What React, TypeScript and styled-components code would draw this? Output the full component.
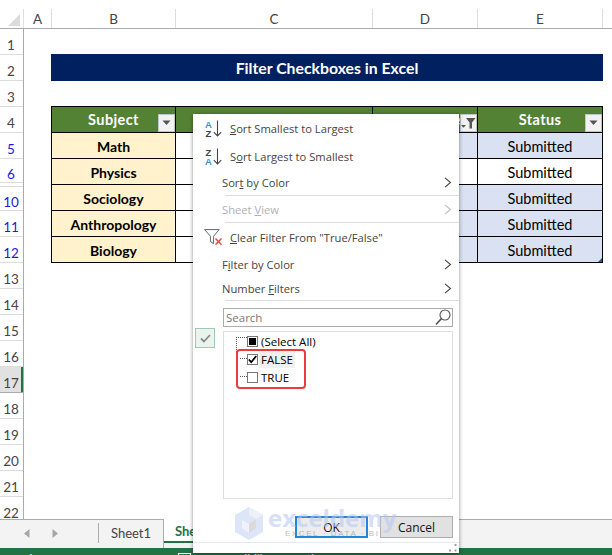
import React from "react";
import styled, { createGlobalStyle } from "styled-components";

const Global = createGlobalStyle`
  html, body { margin: 0; padding: 0; background: #fff; overflow: hidden; }
  * { box-sizing: border-box; }
`;

const CELL_FONT = `"Lato", "Liberation Sans", sans-serif`;
const UI_FONT = `"Open Sans", "Noto Sans", sans-serif`;

const Window = styled.div`
  position: relative;
  width: 612px;
  height: 555px;
  overflow: hidden;
  display: flex;
  flex-direction: column;
  background: #fff;
  font-family: ${CELL_FONT};
`;

/* ---------- column headers ---------- */
const ColumnBar = styled.div`
  display: flex;
  height: 29px;
  padding-top: 9px;
  border-bottom: 1px solid #ababab;
  background: #fff;
  color: #444;
  font-size: 13.5px;
`;
const Corner = styled.div`
  width: 24px;
  border-right: 1px solid #e0e0e0;
  display: flex;
  align-items: flex-end;
  justify-content: flex-end;
  padding: 0 3px 2px 0;
`;
const ColumnHead = styled.div<{ $w: number }>`
  width: ${(p) => p.$w}px;
  border-right: 1px solid #dcdcdc;
  display: flex;
  align-items: center;
  justify-content: center;
`;

/* ---------- sheet body ---------- */
const Body = styled.div`
  display: flex;
  flex: 1;
  min-height: 0;
`;
const RowRail = styled.div`
  width: 24px;
  border-right: 1px solid #ababab;
  overflow: hidden;
  flex: none;
`;
const RowHead = styled.div<{ $h: number; $filtered?: boolean; $active?: boolean }>`
  height: ${(p) => p.$h}px;
  display: flex;
  align-items: center;
  justify-content: center;
  padding: 6px 1px 0 0;
  font-size: 13.5px;
  color: ${(p) => (p.$filtered ? "#1a1ae0" : "#444")};
  border-bottom: 1px solid ${(p) => (p.$active ? "#ababab" : "#dcdcdc")};
  background: ${(p) => (p.$active ? "#e1e1e1" : "#fff")};
  box-shadow: ${(p) => (p.$active ? "inset -2px 0 0 #217346" : "none")};
`;
const HiddenGap = styled.div`
  height: 4px;
  border-bottom: 1px solid #dcdcdc;
`;
const Sheet = styled.div`
  flex: 1;
  padding-left: 27px;
`;
const Title = styled.div`
  width: 552px;
  height: 27px;
  margin-top: 25px;
  padding-bottom: 1px;
  background: #002060;
  color: #fff;
  font-weight: 700;
  font-size: 15.8px;
  display: flex;
  align-items: center;
  justify-content: center;
`;
const Table = styled.div`
  position: relative;
  display: grid;
  grid-template-columns: 124px 197px 105px 125px;
  width: 552px;
  margin-top: 25px;
  border-top: 1px solid #000;
  border-left: 1px solid #000;
`;
const HeadCell = styled.div`
  height: 26px;
  position: relative;
  background: #548235;
  color: #fff;
  font-weight: 700;
  font-size: 14.5px;
  letter-spacing: 0.4px;
  border-right: 1px solid #000;
  border-bottom: 1px solid #000;
  display: flex;
  align-items: center;
  justify-content: center;
`;
const Cell = styled.div<{ $kind: "subject" | "blue" | "white"; $bold?: boolean }>`
  height: 26px;
  padding-top: 1px;
  background: ${(p) => (p.$kind === "subject" ? "#fff2cc" : p.$kind === "blue" ? "#d9e1f2" : "#fff")};
  color: #000;
  font-weight: ${(p) => (p.$bold ? 700 : 400)};
  font-size: ${(p) => (p.$bold ? 14 : 14.5)}px;
  border-right: 1px solid #000;
  border-bottom: 1px solid #000;
  display: flex;
  align-items: center;
  justify-content: center;
`;
const FilterButton = styled.span`
  position: absolute;
  right: 0;
  bottom: 0;
  width: 17px;
  height: 18px;
  background: #f2f2f2;
  border: 1px solid #c4c4c4;
  display: flex;
  align-items: center;
  justify-content: center;
`;
const ResizeMark = styled.span`
  position: absolute;
  right: 1px;
  bottom: 1px;
  width: 0;
  height: 0;
  border-left: 4px solid transparent;
  border-bottom: 4px solid #2f5597;
`;

/* ---------- tabs + status ---------- */
const TabBar = styled.div`
  height: 29px;
  flex: none;
  display: flex;
  background: #f3f3f3;
  border-top: 1px solid #ababab;
`;
const TabNav = styled.div`
  width: 99px;
  display: flex;
  align-items: center;
  gap: 22px;
  padding: 0 0 2px 24px;
  position: relative;
`;
const NavDivider = styled.span`
  position: absolute;
  right: 0;
  top: 3px;
  height: 20px;
  border-right: 1px solid #ababab;
`;
const Tab = styled.div`
  width: 65px;
  height: 28px;
  border-right: 1px solid #ababab;
  color: #444;
  font-size: 13px;
  display: flex;
  align-items: center;
  justify-content: center;
  padding-bottom: 3px;
`;
const ActiveTab = styled.div`
  width: 70px;
  height: 24px;
  margin-top: -1px;
  padding: 1px 0 0 11px;
  background: #fff;
  border-bottom: 2px solid #217346;
  color: #217346;
  font-weight: 700;
  font-size: 13px;
  display: flex;
  align-items: center;
`;
const StatusBar = styled.div`
  height: 7px;
  flex: none;
  background: #217346;
  color: #fff;
  font-size: 12px;
  line-height: 14px;
  overflow: hidden;
  display: flex;
  padding: 4px 0 0 6px;
`;
const StatusBox = styled.span`
  width: 13px;
  height: 14px;
  margin: 1px 17px 0 140px;
  background: #217346;
  border: 1px solid #fff;
`;

/* ---------- filter menu ---------- */
const Menu = styled.div`
  position: absolute;
  left: 193px;
  top: 114px;
  width: 266px;
  height: 439px;
  background: #fff;
  box-shadow: 0 1px 4px rgba(0, 0, 0, 0.45);
  font-family: ${UI_FONT};
  font-size: 11.2px;
  color: #444;
  display: flex;
  flex-direction: column;
`;
const MenuItem = styled.div<{ $h: number; $disabled?: boolean; $tight?: boolean }>`
  height: ${(p) => p.$h}px;
  flex: none;
  display: flex;
  align-items: center;
  padding-left: ${(p) => (p.$tight ? 11 : 29)}px;
  padding-right: 7px;
  color: ${(p) => (p.$disabled ? "#b1b1b1" : "#444")};
`;
const IconSlot = styled.span`
  width: 26px;
  height: 100%;
  flex: none;
  display: flex;
  align-items: center;
`;
const Label = styled.span`
  flex: 1;
  white-space: nowrap;
`;
const MenuSeparator = styled.div`
  height: 1px;
  flex: none;
  margin-left: 32px;
  background: #dcdcdc;
`;
const SortGlyph = styled.span`
  position: relative;
  display: flex;
  flex-direction: column;
  width: 9px;
  font-family: "Liberation Sans", sans-serif;
  font-size: 9.5px;
  line-height: 9px;
  font-weight: 700;
  text-align: center;
`;
const SortLetter = styled.span<{ $blue?: boolean }>`
  color: ${(p) => (p.$blue ? "#3f8fd6" : "#444")};
`;
const SearchBox = styled.div`
  flex: none;
  width: 230px;
  height: 19px;
  margin: 7px 0 0 30px;
  border: 1px solid #ababab;
  padding: 0 1px 0 2px;
  display: flex;
  align-items: center;
  justify-content: space-between;
  color: #777;
  font-size: 11.5px;
`;
const ListRow = styled.div`
  display: flex;
  flex: none;
  margin-top: 1px;
`;
const CheckTile = styled.div`
  width: 20px;
  height: 20px;
  margin: 0 8px 0 2px;
  background: #e9f4ee;
  border: 1px solid #9ccbb0;
  display: flex;
  align-items: center;
  justify-content: center;
`;
const TreeBox = styled.div`
  position: relative;
  width: 230px;
  height: 168px;
  margin-top: 3px;
  border: 1px solid #dedede;
  padding: 0 0 0 12px;
  color: #000;
  font-size: 11.5px;
`;
const TreeRow = styled.div`
  display: flex;
  align-items: center;
  height: 18px;
`;
const Connector = styled.span<{ $root?: boolean }>`
  width: ${(p) => (p.$root ? 11 : 7)}px;
  height: 9px;
  margin-top: -9px;
  margin-left: ${(p) => (p.$root ? 0 : 4)}px;
  border-bottom: 1px dotted #555;
  ${(p) => (p.$root ? "border-left: 1px dotted #555; height: 15px; margin-top: 6px; border-bottom: none; border-top: 1px dotted #555;" : "")}
  flex: none;
`;
const TreeCheck = styled.span<{ $state: "mixed" | "on" | "off" }>`
  width: 11px;
  height: 11px;
  border: 1px solid #777;
  background: #fff;
  flex: none;
  display: flex;
  align-items: center;
  justify-content: center;
  margin-right: 1px;
  &::after {
    content: "";
    display: ${(p) => (p.$state === "mixed" ? "block" : "none")};
    width: 7px;
    height: 7px;
    background: #000;
  }
`;
const TreeLabel = styled.span<{ $hover?: boolean }>`
  padding: 0 2px;
  line-height: 17px;
  background: ${(p) => (p.$hover ? "#f0f0f0" : "transparent")};
`;
const Highlight = styled.div`
  position: absolute;
  left: 12px;
  top: 17px;
  width: 70px;
  height: 40px;
  border: 2.5px solid #ee3a3f;
  border-radius: 4px;
  pointer-events: none;
`;
const ButtonRow = styled.div`
  display: flex;
  gap: 12px;
  margin: 17px 0 0 102px;
  flex: none;
`;
const OkButton = styled.div`
  width: 73px;
  height: 22px;
  background: #ececec;
  border: 2px solid #1f86dc;
  color: #111;
  font-size: 12px;
  display: flex;
  align-items: center;
  justify-content: center;
`;
const CancelButton = styled.div`
  width: 73px;
  height: 22px;
  background: #e1e1e1;
  border: 1px solid #adadad;
  color: #111;
  font-size: 12px;
  display: flex;
  align-items: center;
  justify-content: center;
`;
const MenuFooter = styled.div`
  margin-top: 4px;
  flex: 1;
  border-top: 1px solid #e3ebf2;
  display: flex;
  justify-content: flex-end;
  align-items: flex-end;
  padding: 0 2px 1px 0;
`;

/* ---------- watermark ---------- */
const Watermark = styled.div`
  position: absolute;
  left: 235px;
  top: 507px;
  display: flex;
  gap: 5px;
  pointer-events: none;
  opacity: 0.55;
`;
const WatermarkText = styled.div`
  display: flex;
  flex-direction: column;
  align-items: center;
`;
const WatermarkName = styled.span`
  font-family: "Open Sans", sans-serif;
  font-weight: 700;
  font-size: 24px;
  line-height: 22px;
  color: #b4c6f2;
`;
const WatermarkTag = styled.span`
  font-family: "Liberation Sans", sans-serif;
  font-size: 8px;
  line-height: 9px;
  letter-spacing: 1.6px;
  color: #888;
`;

/* ---------- drawings ---------- */
const Down = () => (
  <svg width="9" height="6" viewBox="0 0 9 6">
    <path d="M0.5 0.5h8L4.5 5z" fill="#555" />
  </svg>
);
const FilterOn = () => (
  <svg width="15" height="12" viewBox="0 0 15 12">
    <path d="M5 1h9.5L11 5.5V11.5H8.5V5.5z" fill="#555" />
    <path d="M0 8h5L2.5 10.8z" fill="#555" />
  </svg>
);
const Arrow = () => (
  <svg width="9" height="17" viewBox="0 0 9 17" fill="none" stroke="#444" strokeWidth="1.1">
    <path d="M4.5 0.5V16M0.8 12.2 4.5 16 8.2 12.2" />
  </svg>
);
const Chevron = ({ light }: { light?: boolean }) => (
  <svg width="8" height="11" viewBox="0 0 8 11" fill="none" stroke={light ? "#bdbdbd" : "#444"} strokeWidth="1.1">
    <path d="M1 0.8 6.5 5.5 1 10.2" />
  </svg>
);
const ClearFunnel = () => (
  <svg width="19" height="17" viewBox="0 0 19 17" fill="none">
    <path d="M0.6 0.6H15.2L9.6 7.2V14.8L6.4 12.4V7.2z" stroke="#666" strokeWidth="1" />
    <path d="M11.5 9.5 17.5 15.8M17.5 9.5 11.5 15.8" stroke="#e4454a" strokeWidth="1.4" />
  </svg>
);
const Magnifier = () => (
  <svg width="16" height="17" viewBox="0 0 16 17" fill="none" stroke="#555" strokeWidth="1.1">
    <circle cx="10" cy="6" r="5" />
    <path d="M6.4 9.6 1 15.5" strokeWidth="1.6" />
  </svg>
);
const TileCheck = () => (
  <svg width="11" height="9" viewBox="0 0 11 9" fill="none" stroke="#8a8a8a" strokeWidth="1.8">
    <path d="M1 4.5 4 7.5 10 1" />
  </svg>
);
const BoxCheck = () => (
  <svg width="9" height="9" viewBox="0 0 9 9" fill="none" stroke="#000" strokeWidth="1.8">
    <path d="M0.8 4.5 3.2 7.2 8.2 1" />
  </svg>
);
const Grip = () => (
  <svg width="8" height="8" viewBox="0 0 8 8" fill="#a0a0a0">
    <rect x="5.5" y="0" width="2" height="2" />
    <rect x="0" y="5.5" width="2" height="2" />
    <rect x="5.5" y="5.5" width="2" height="2" />
  </svg>
);
const TriLeft = () => (
  <svg width="6" height="9" viewBox="0 0 6 9">
    <path d="M5.5 0v9L0 4.5z" fill="#a6a6a6" />
  </svg>
);
const TriRight = () => (
  <svg width="6" height="9" viewBox="0 0 6 9">
    <path d="M0.5 0v9L6 4.5z" fill="#a6a6a6" />
  </svg>
);
const CornerMark = () => (
  <svg width="12" height="12" viewBox="0 0 12 12">
    <path d="M12 0V12H0z" fill="#dcdcdc" />
  </svg>
);
const Cube = () => (
  <svg width="28" height="33" viewBox="0 0 28 33">
    <path d="M14 0 28 8V25L14 33 0 25V8z" fill="#c3d1f4" />
    <path d="M14 0 28 8 21 12 14 8z" fill="#dfe4ee" />
    <path d="M14 17 21 12V21L14 26z" fill="#bdbdbd" />
    <path d="M14 17 7 13V21L14 26z" fill="#e4e8f2" />
  </svg>
);

const columns: [string, number][] = [
  ["A", 28],
  ["B", 124],
  ["C", 197],
  ["D", 105],
  ["E", 125],
];

const rowHeads: { n: number; h: number; filtered?: boolean; active?: boolean; gapBefore?: boolean }[] = [
  { n: 1, h: 26 },
  { n: 2, h: 26 },
  { n: 3, h: 26 },
  { n: 4, h: 26 },
  { n: 5, h: 26, filtered: true },
  { n: 6, h: 24, filtered: true },
  { n: 10, h: 24, filtered: true, gapBefore: true },
  { n: 11, h: 26, filtered: true },
  { n: 12, h: 26, filtered: true },
  ...[13, 14, 15, 16].map((n) => ({ n, h: 26 })),
  { n: 17, h: 26, active: true },
  ...[18, 19, 20, 21, 22].map((n) => ({ n, h: 26 })),
];

const rows = [
  { subject: "Math", blue: true },
  { subject: "Physics", blue: false },
  { subject: "Sociology", blue: true },
  { subject: "Anthropology", blue: true },
  { subject: "Biology", blue: true },
];

export default function App() {
  return (
    <Window>
      <Global />
      <ColumnBar>
        <Corner>
          <CornerMark />
        </Corner>
        {columns.map(([name, w]) => (
          <ColumnHead key={name} $w={w}>
            {name}
          </ColumnHead>
        ))}
      </ColumnBar>
      <Body>
        <RowRail>
          {rowHeads.map((r) => (
            <React.Fragment key={r.n}>
              {r.gapBefore && <HiddenGap />}
              <RowHead $h={r.h} $filtered={r.filtered} $active={r.active}>
                {r.n}
              </RowHead>
            </React.Fragment>
          ))}
        </RowRail>
        <Sheet>
          <Title>Filter Checkboxes in Excel</Title>
          <Table>
            <HeadCell>
              Subject
              <FilterButton>
                <Down />
              </FilterButton>
            </HeadCell>
            <HeadCell />
            <HeadCell>
              True/False
              <FilterButton>
                <FilterOn />
              </FilterButton>
            </HeadCell>
            <HeadCell>
              Status
              <FilterButton>
                <Down />
              </FilterButton>
            </HeadCell>
            {rows.map((r) => (
              <React.Fragment key={r.subject}>
                <Cell $kind="subject" $bold>
                  {r.subject}
                </Cell>
                <Cell $kind="white" />
                <Cell $kind={r.blue ? "blue" : "white"} />
                <Cell $kind={r.blue ? "blue" : "white"}>Submitted</Cell>
              </React.Fragment>
            ))}
            <ResizeMark />
          </Table>
        </Sheet>
      </Body>
      <TabBar>
        <TabNav>
          <TriLeft />
          <TriRight />
          <NavDivider />
        </TabNav>
        <Tab>Sheet1</Tab>
        <ActiveTab>Sheet2</ActiveTab>
      </TabBar>
      <StatusBar>
        Ready
        <StatusBox />
        Accessibility: Investigate
      </StatusBar>

      <Menu>
        <MenuItem $h={29} $tight>
          <IconSlot>
            <SortGlyph>
              <SortLetter $blue>A</SortLetter>
              <SortLetter>Z</SortLetter>
            </SortGlyph>
            <Arrow />
          </IconSlot>
          <Label>
            <u>S</u>ort Smallest to Largest
          </Label>
        </MenuItem>
        <MenuItem $h={27} $tight>
          <IconSlot>
            <SortGlyph>
              <SortLetter>Z</SortLetter>
              <SortLetter $blue>A</SortLetter>
            </SortGlyph>
            <Arrow />
          </IconSlot>
          <Label>
            S<u>o</u>rt Largest to Smallest
          </Label>
        </MenuItem>
        <MenuItem $h={25}>
          <Label>
            Sor<u>t</u> by Color
          </Label>
          <Chevron />
        </MenuItem>
        <MenuSeparator />
        <MenuItem $h={26} $disabled>
          <Label>
            Sheet <u>V</u>iew
          </Label>
          <Chevron light />
        </MenuItem>
        <MenuSeparator />
        <MenuItem $h={29} $tight>
          <IconSlot>
            <ClearFunnel />
          </IconSlot>
          <Label>
            <u>C</u>lear Filter From "True/False"
          </Label>
        </MenuItem>
        <MenuItem $h={24}>
          <Label>
            F<u>i</u>lter by Color
          </Label>
          <Chevron />
        </MenuItem>
        <MenuItem $h={24}>
          <Label>
            Number <u>F</u>ilters
          </Label>
          <Chevron />
        </MenuItem>
        <MenuSeparator />
        <SearchBox>
          Search
          <Magnifier />
        </SearchBox>
        <ListRow>
          <CheckTile>
            <TileCheck />
          </CheckTile>
          <TreeBox>
            <TreeRow>
              <Connector $root />
              <TreeCheck $state="mixed" />
              <TreeLabel>(Select All)</TreeLabel>
            </TreeRow>
            <TreeRow>
              <Connector />
              <TreeCheck $state="on">
                <BoxCheck />
              </TreeCheck>
              <TreeLabel $hover>FALSE</TreeLabel>
            </TreeRow>
            <TreeRow>
              <Connector />
              <TreeCheck $state="off" />
              <TreeLabel>TRUE</TreeLabel>
            </TreeRow>
            <Highlight />
          </TreeBox>
        </ListRow>
        <ButtonRow>
          <OkButton>OK</OkButton>
          <CancelButton>Cancel</CancelButton>
        </ButtonRow>
        <MenuFooter>
          <Grip />
        </MenuFooter>
      </Menu>

      <Watermark>
        <Cube />
        <WatermarkText>
          <WatermarkName>exceldemy</WatermarkName>
          <WatermarkTag>EXCEL · DATA · BI</WatermarkTag>
        </WatermarkText>
      </Watermark>
    </Window>
  );
}
